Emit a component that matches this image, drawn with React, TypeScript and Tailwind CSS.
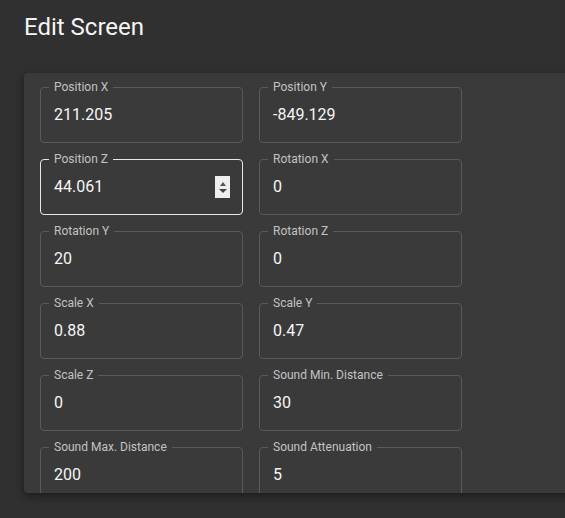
import React from "react";

const fields: { label: string; value: string; focused?: boolean }[] = [
  { label: "Position X", value: "211.205" },
  { label: "Position Y", value: "-849.129" },
  { label: "Position Z", value: "44.061", focused: true },
  { label: "Rotation X", value: "0" },
  { label: "Rotation Y", value: "20" },
  { label: "Rotation Z", value: "0" },
  { label: "Scale X", value: "0.88" },
  { label: "Scale Y", value: "0.47" },
  { label: "Scale Z", value: "0" },
  { label: "Sound Min. Distance", value: "30" },
  { label: "Sound Max. Distance", value: "200" },
  { label: "Sound Attenuation", value: "5" },
];

function Field({ label, value, focused }: { label: string; value: string; focused?: boolean }) {
  return (
    <div
      className={
        "relative h-[56px] w-[203px] rounded-[4px] border " +
        (focused ? "border-[#e8e8e8]" : "border-[#5a5a5a]")
      }
    >
      <span className="absolute left-[8px] top-[-9px] bg-[#3a3a3a] px-[5px] text-[12px] leading-[16px] text-[#c2c2c2]">
        {label}
      </span>
      <div className="flex h-full items-center justify-between pl-[13px] pr-[12px]">
        <span className="text-[16px] leading-[20px] text-[#f5f5f5]">{value}</span>
        {focused && (
          <div className="flex h-[22px] w-[15px] flex-col items-center justify-center gap-[3px] bg-[#efefef]">
            <div className="h-0 w-0 border-x-[3px] border-b-[4px] border-x-transparent border-b-[#555]" />
            <div className="h-0 w-0 border-x-[4px] border-t-[4px] border-x-transparent border-t-[#444]" />
          </div>
        )}
      </div>
    </div>
  );
}

export default function App() {
  return (
    <div
      className="flex h-[518px] w-full flex-col overflow-hidden bg-[#303030]"
      style={{ fontFamily: "Roboto, 'Noto Sans', sans-serif" }}
    >
      <h1 className="ml-6 mt-[11px] text-[24px] leading-[32px] font-normal text-[#f5f5f5]">Edit Screen</h1>
      <div className="ml-6 -mr-10 mt-[30px] h-[420px] overflow-hidden rounded-[4px] bg-[#3a3a3a] pl-4 pt-[14px] shadow-[0_3px_8px_rgba(0,0,0,0.45)]">
        <div className="grid w-fit grid-cols-[203px_203px] gap-x-4 gap-y-4">
          {fields.map((f) => (
            <Field key={f.label} {...f} />
          ))}
        </div>
      </div>
    </div>
  );
}
